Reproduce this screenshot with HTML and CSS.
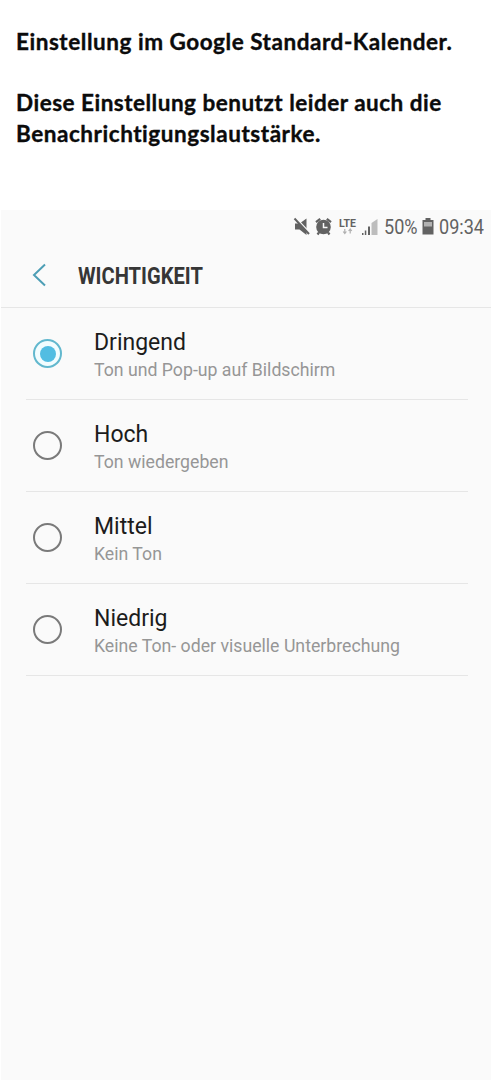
FILE: index.html
```html
<!DOCTYPE html>
<html lang="de">
<head>
<meta charset="utf-8">
<meta name="viewport" content="width=device-width">
<title>Wichtigkeit</title>
<link rel="stylesheet" href="styles.css">
</head>
<body>
<header class="note">
  <p class="note-line line-a">Einstellung im Google Standard-Kalender.</p>
  <p class="note-line line-b">Diese Einstellung benutzt leider auch die</p>
  <p class="note-line line-c">Benachrichtigungslautstärke.</p>
</header>
<main class="phone">
  <div class="status">
    <svg class="status-icons" width="88" height="22" viewBox="0 0 88 22">
      <g fill="#626262">
        <path d="M2 7.500h4.500l7-5v16.500l-7-5.500H2z"/>
        <path d="M3 2L17 17" stroke="#fafafa" stroke-width="1.500"/>
        <path d="M1.500 2.500L16 18" stroke="#626262" stroke-width="2"/>
        <circle cx="30.500" cy="11" r="7.300"/>
        <path d="M23 6.200l4.200-3.400M38 6.200l-4.200-3.400M26 16.500l-1.500 2M35 16.500l1.500 2" stroke="#626262" stroke-width="2.200"/>
        <path d="M30.500 7v4.500h4" fill="none" stroke="#fafafa" stroke-width="1.500"/>
        <path d="M69 17h1.500v2H69zM71.800 14.500h1.500V19h-1.500zM75 10.500h2V19h-2z"/>
      </g>
      <path d="M78.500 7L84.500 3v16h-6z" fill="#bdbdbd"/>
      <text x="46" y="10.600" class="lte">LTE</text>
      <path d="M51.800 13v4.500M50.200 15.500l1.600 2 1.600-2M57.200 17.500V13M55.600 15l1.600-2 1.600 2" fill="none" stroke="#b0b0b0" stroke-width="1.200"/>
    </svg>
    <span class="status-text percent"><span>50%</span></span>
    <svg class="battery" width="12" height="18" viewBox="0 0 12 18">
      <path d="M3.500 0h5v2H11.500v14.500H.5V2h3z" fill="#626262"/>
      <path d="M2 4h8v4.500H2z" fill="#b2b2b2"/>
    </svg>
    <span class="status-text clock"><span>09:34</span></span>
  </div>
  <div class="titlebar">
    <svg class="back" width="14" height="24" viewBox="0 0 14 24"><path d="M13 1.500L2 12l11 10.500" fill="none" stroke="#4d9eb5" stroke-width="2"/></svg>
    <h1 class="title">WICHTIGKEIT</h1>
  </div>
  <ul class="options">
    <li class="option"><span class="radio selected"></span><div class="label"><div class="name">Dringend</div><div class="desc">Ton und Pop-up auf Bildschirm</div></div></li>
    <li class="option"><span class="radio"></span><div class="label"><div class="name">Hoch</div><div class="desc">Ton wiedergeben</div></div></li>
    <li class="option"><span class="radio"></span><div class="label"><div class="name">Mittel</div><div class="desc">Kein Ton</div></div></li>
    <li class="option"><span class="radio"></span><div class="label"><div class="name">Niedrig</div><div class="desc">Keine Ton- oder visuelle Unterbrechung</div></div></li>
  </ul>
</main>
</body>
</html>
```
FILE: styles.css
```css
* { box-sizing: border-box; }
body { margin: 0; background: #fff; font-family: Roboto, sans-serif; }
.note { height: 210px; padding: 26px 0 0 16px; }
.note-line { margin: 0; width: max-content; font: 700 22.500px/31px Lato, sans-serif; letter-spacing: .54px; font-variant-ligatures: none; -webkit-text-stroke: .35px #0b0b0b; color: #0b0b0b; white-space: nowrap; }
.line-a { margin-bottom: 30px; }
.line-b { letter-spacing: .5px; }
.phone { height: 870px; margin-left: 1px; background: #fafafa; }
.status { display: flex; height: 34px; padding: 6px 0 0 292px; color: #626262; }
.status-icons { flex: none; }
.lte { font: 700 10.500px Roboto, sans-serif; fill: #626262; }
.status-text { flex: none; font-size: 21px; line-height: 22px; white-space: nowrap; }
.status-text span { display: inline-block; transform: scaleX(.86); transform-origin: 0 50%; }
.percent { width: 34px; margin-left: 3px; }
.battery { flex: none; margin: 2px 0 0 4px; }
.clock { margin-left: 5px; width: 48px; }
.titlebar { display: flex; align-items: center; height: 64px; padding-left: 31px; border-bottom: 1px solid #e6e6e6; }
.back { flex: none; margin-bottom: 1px; }
.title { margin: 2px 0 0 32px; font-size: 23px; line-height: 28px; font-weight: 700; color: #363636; transform: scaleX(.875); transform-origin: 0 50%; }
.options { list-style: none; margin: 0; padding: 0 23px 0 25px; }
.option { display: flex; align-items: center; height: 92px; padding-left: 7px; border-bottom: 1px solid #e6e6e6; }
.radio { flex: none; display: grid; place-items: center; width: 29px; height: 29px; border: 2px solid #7a7a7a; border-radius: 50%; }
.radio.selected { border-color: #62b8ce; background: #f2fdff; }
.radio.selected::before { content: ""; width: 16px; height: 16px; border-radius: 50%; background: #52bde2; }
.label { margin-left: 32px; padding-top: 3px; white-space: nowrap; }
.name { font-size: 23px; line-height: 30px; color: #1c1c1c; }
.desc { font-size: 17.700px; line-height: 25px; color: #969696; }
```
